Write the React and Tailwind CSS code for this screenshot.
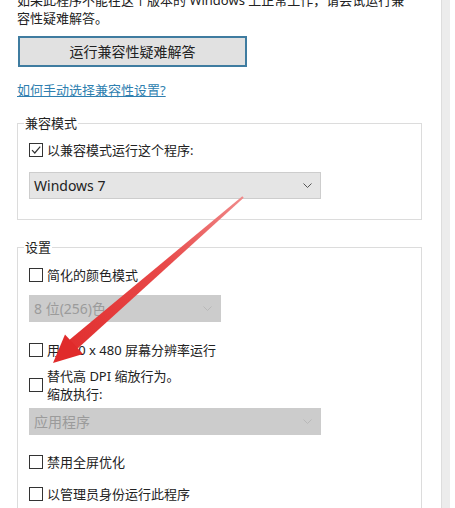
import React from 'react';

const font = { fontFamily: '"Noto Sans", "Noto Sans CJK SC", sans-serif' };

function Box({ checked }) {
  return (
    <span className="w-[14px] h-[14px] border border-[#333] bg-white flex items-center justify-center shrink-0">
      {checked && (
        <svg width="12" height="12" viewBox="0 0 12 12">
          <path d="M2 6.2 L4.8 9 L10.2 2.6" fill="none" stroke="#333" strokeWidth="1.2" />
        </svg>
      )}
    </span>
  );
}

function Check({ checked, children, className = '' }) {
  return (
    <div className={`flex items-center gap-[4px] leading-[18px] ${className}`}>
      <Box checked={checked} />
      <div>{children}</div>
    </div>
  );
}

function Select({ value, disabled, width, className = '' }) {
  return (
    <div
      className={`h-[27px] flex items-center justify-between pl-[4px] pr-[8px] border text-[14px] ${width} ${className} ${
        disabled ? 'bg-[#cccccc] border-[#cccccc] text-[#9b9b9b]' : 'bg-[#e5e5e5] border-[#cdcdcd] text-[#222]'
      }`}
    >
      <span>{value}</span>
      <svg width="9" height="5" viewBox="0 0 9 5">
        <path d="M0.5 0.5 L4.5 4.5 L8.5 0.5" fill="none" stroke={disabled ? '#b8b8b8' : '#555'} strokeWidth="1" />
      </svg>
    </div>
  );
}

export default function App() {
  return (
    <div className="w-[455px] h-[508px] overflow-hidden relative bg-white flex text-[13px] text-[#222]" style={font}>
      <div className="w-[441px] pl-[17px] shrink-0">
        <p className="mt-[-9px] leading-[18px]">
          如果此程序不能在这个版本的 Windows 上正常工作，请尝试运行兼
          <br />
          容性疑难解答。
        </p>

        <button className="mt-[9px] ml-[1px] w-[229px] h-[31px] bg-[#e1e1e1] border-2 border-[#3f7ca0] text-[14px] text-[#222] flex items-center justify-center">
          运行兼容性疑难解答
        </button>

        <a className="block mt-[14px] leading-[18px] text-[#2f7fb0] underline w-fit">如何手动选择兼容性设置?</a>

        <fieldset className="mt-[15px] w-[405px] border border-[#dcdcdc] pb-[20px]">
          <legend className="ml-[6px] px-[1px] leading-[18px]">兼容模式</legend>
          <div className="pl-[11px] pt-[9px]">
            <Check checked>以兼容模式运行这个程序:</Check>
            <Select value="Windows 7" width="w-[292px]" className="mt-[13px]" />
          </div>
        </fieldset>

        <fieldset className="mt-[18px] w-[405px] border border-[#dcdcdc] pb-[20px]">
          <legend className="ml-[6px] px-[1px] leading-[18px]">设置</legend>
          <div className="pl-[11px] pt-[10px]">
            <Check>简化的颜色模式</Check>
            <Select value="8 位(256)色" disabled width="w-[192px]" className="mt-[11px]" />
            <Check className="mt-[19px]">用 640 x 480 屏幕分辨率运行</Check>
            <Check className="mt-[8px]">
              替代高 DPI 缩放行为。
              <br />
              缩放执行:
            </Check>
            <Select value="应用程序" disabled width="w-[292px]" className="mt-[5px]" />
            <Check className="mt-[18px]">禁用全屏优化</Check>
            <Check className="mt-[14px]">以管理员身份运行此程序</Check>
          </div>
        </fieldset>
      </div>
      <div className="w-[9px] h-full bg-[#ececec] border-l border-[#dddddd] shrink-0" />
      <div className="flex-1 bg-white" />

      {/* red annotation arrow */}
      <svg className="absolute inset-0 pointer-events-none" width="455" height="508">
        <defs>
          <linearGradient id="arr" x1="243" y1="197" x2="53" y2="363" gradientUnits="userSpaceOnUse">
            <stop offset="0" stopColor="#f08a8a" />
            <stop offset="0.4" stopColor="#e84a4a" />
            <stop offset="1" stopColor="#e02b2b" />
          </linearGradient>
        </defs>
        <polygon points="242.3,196.2 243.7,197.8 76,350 68,341" fill="url(#arr)" />
        <polygon points="53,363 65,334.5 83,354" fill="#e02b2b" />
      </svg>
    </div>
  );
}
